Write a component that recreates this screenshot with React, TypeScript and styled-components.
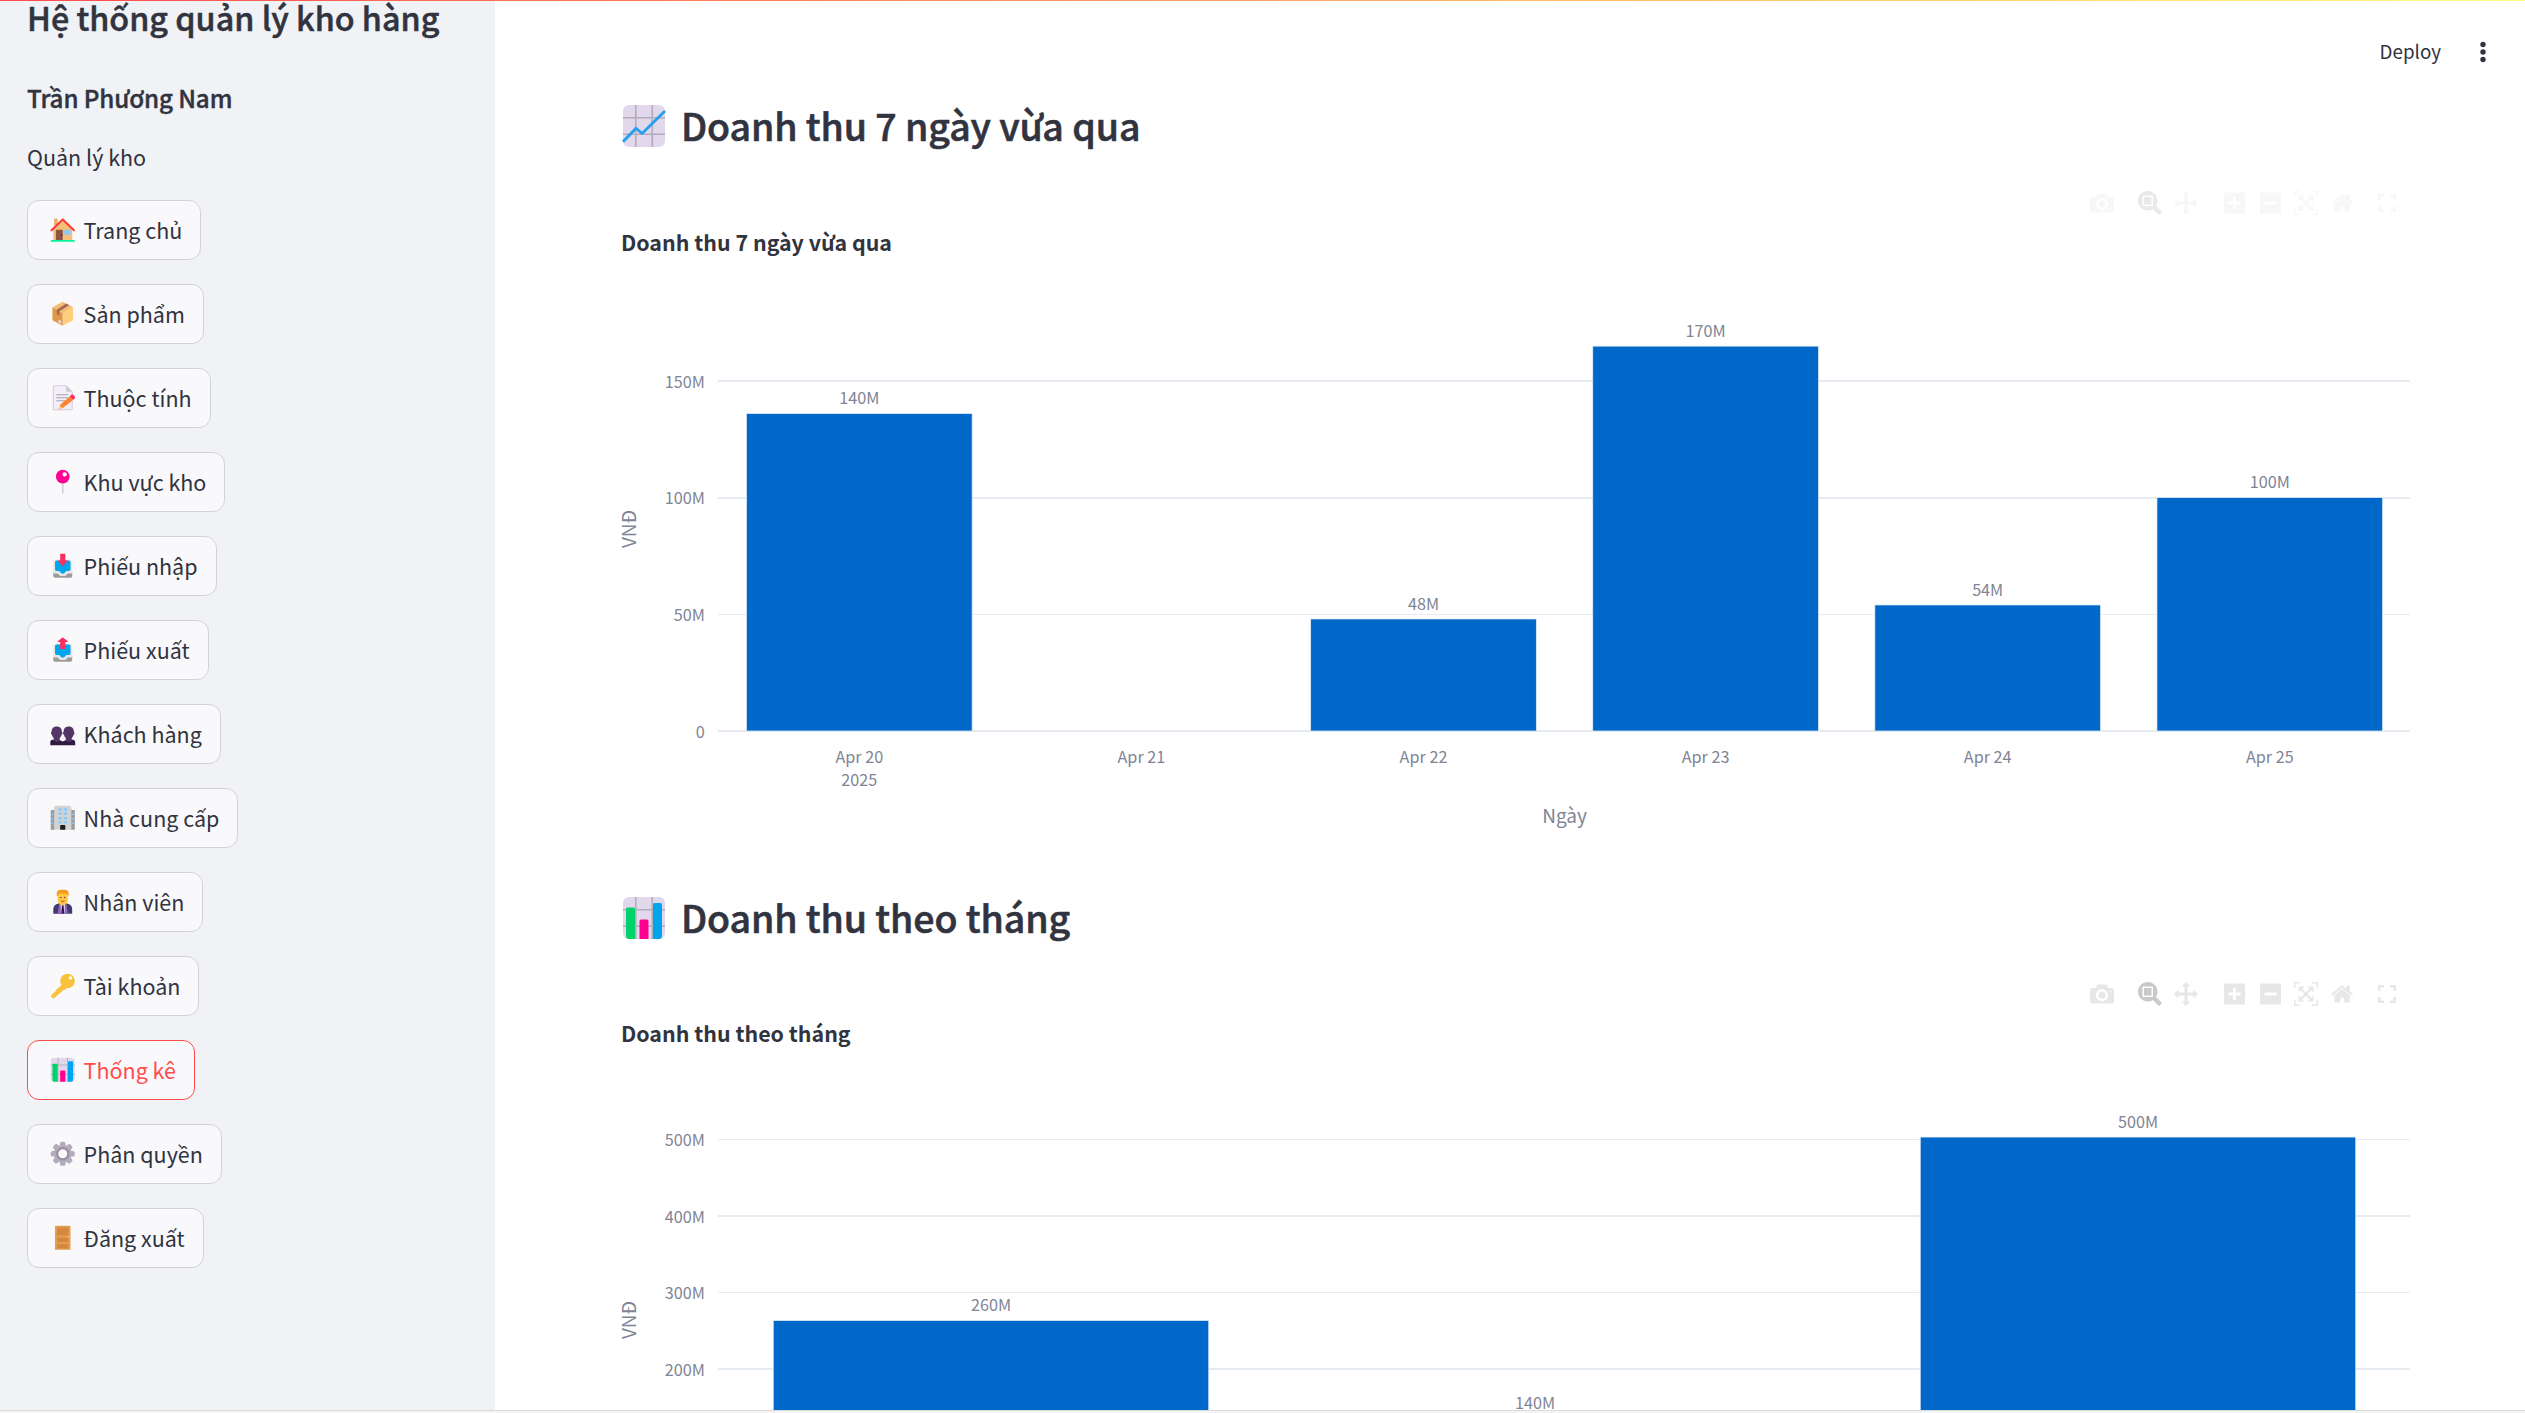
import React from "react";
import styled, { createGlobalStyle } from "styled-components";

const GlobalStyle = createGlobalStyle`
  *, *::before, *::after { box-sizing: border-box; }
  html, body { margin: 0; padding: 0; background: #fff; overflow: hidden; }
  body {
    font-family: "Noto Sans CJK SC", "Noto Sans", sans-serif;
    color: #31333f;
    font-size: 21.5px;
  }
`;

const Shell = styled.div`
  height: 1413px;
  display: grid;
  grid-template-rows: 1410px 3px;
  overflow: hidden;
`;
const Page = styled.div`
  position: relative;
  display: grid;
  grid-template-columns: 494.5px 1fr;
  overflow: hidden;
`;
const TopAccent = styled.div`
  position: absolute;
  inset: 0 0 auto 0;
  height: 1px;
  background: linear-gradient(90deg, #ff4b4b, #fffd80);
`;
const WindowEdge = styled.div`
  background: #f4f4f4;
  border-top: 1px solid #dcdcdc;
`;

const Sidebar = styled.aside`
  background: #f0f2f6;
  padding-left: 27px;
  overflow: hidden;
`;
const AppTitle = styled.h1`
  margin: 0;
  font-size: 32.3px;
  line-height: 34px;
  font-weight: 500;
  -webkit-text-stroke: 0.5px currentColor;
  white-space: nowrap;
`;
const UserName = styled.h3`
  margin: 49px 0 0;
  font-size: 24.2px;
  line-height: 30px;
  font-weight: 500;
  letter-spacing: -0.09px;
  -webkit-text-stroke: 0.4px currentColor;
`;
const Role = styled.p`
  margin: 27px 0 0;
  line-height: 34px;
`;
const Nav = styled.nav`
  margin-top: 26px;
  display: flex;
  flex-direction: column;
  align-items: flex-start;
  gap: 24px;
`;
const NavButton = styled.button<{ $active?: boolean }>`
  height: 60px;
  padding: 0 18px 1px;
  display: flex;
  align-items: center;
  border: 1px solid ${(p) => (p.$active ? "#ff4b4b" : "#d1d3d8")};
  border-radius: 12px;
  background: #f9f9fb;
  color: ${(p) => (p.$active ? "#ff4b4b" : "#31333f")};
  font: inherit;
  line-height: 36px;
  white-space: nowrap;
  svg { margin: 0 7.600px 0 2.500px; }
`;

const Main = styled.main`
  display: flex;
  flex-direction: column;
  padding: 0 115px 0 126.5px;
  overflow: hidden;
`;
const Header = styled.header`
  height: 100px;
  flex: none;
  margin-right: -82px;
  display: flex;
  justify-content: flex-end;
  align-items: flex-start;
  padding-top: 36px;
  gap: 33px;
`;
const Deploy = styled.span`
  font-size: 18.8px;
  line-height: 30px;
`;
const Section = styled.section`
  flex: none;
`;
const Heading = styled.h2`
  margin: 0 0 0 -1px;
  height: 50px;
  display: flex;
  align-items: center;
  gap: 13px;
  font-size: 37.5px;
  line-height: 50px;
  font-weight: 500;
  letter-spacing: -0.09px;
  -webkit-text-stroke: 0.6px currentColor;
  white-space: nowrap;
  svg { margin-top: 2px; }
`;
const Toolbar = styled.div<{ $tone: string }>`
  margin-top: 35px;
  height: 36px;
  display: flex;
  justify-content: flex-end;
  padding-right: 8px;
  gap: 12px;
  color: ${(p) => p.$tone};
  ${Section} + ${Section} & { margin-top: 34px; }
`;
const ToolGroup = styled.div`
  display: flex;
`;
const Tool = styled.span<{ $tone?: string; $width?: number }>`
  width: ${(p) => p.$width ?? 36}px;
  height: 36px;
  display: flex;
  align-items: center;
  justify-content: center;
  color: ${(p) => p.$tone ?? "inherit"};
`;
const ChartTitle = styled.h4`
  margin: 6px 0 0;
  font-size: 21.4px;
  line-height: 30px;
  font-weight: 700;
`;
const Plot = styled.svg`
  display: block;
  height: 635px;
  overflow: visible;
  font-family: "Noto Sans CJK SC", "Noto Sans", sans-serif;
  fill: #808495;
`;

type Art = { size?: number };
const Emoji = ({ size = 27.5, children }: Art & { children: React.ReactNode }) => (
  <svg width={size} height={size} viewBox="0 0 32 32">{children}</svg>
);

const House = () => (
  <Emoji>
    <path d="M6 3h4v8H6z" fill="#f3ad61" />
    <path d="M5 15 16 5l11 10v14H5z" fill="#f3c07b" />
    <path d="M8 16h8v12H8z" fill="#8c5543" />
    <path d="M18 16h7v6h-7z" fill="#83cbff" />
    <path d="M3 16.5 16 4l13 12.5" fill="none" stroke="#ff3838" strokeWidth="2.4" strokeLinecap="round" strokeLinejoin="round" />
    <rect x="2" y="28" width="28" height="2" rx="1" fill="#00f397" />
    <circle cx="14.6" cy="22.5" r=".9" fill="#3c1b10" />
  </Emoji>
);
const Box = () => (
  <Emoji>
    <path d="m16 2 12 6.5-12 7L4 8.500z" fill="#f3bd73" />
    <path d="m4 8.500 12 7V30L4 23.500z" fill="#e19747" />
    <path d="m28 8.500-12 7V30l12-6.500z" fill="#ffce7c" />
    <path d="m20 4.200 3.500 1.900L12 13v5l-3-1.800v-5z" fill="#a56953" />
    <path d="m11 23 3 1.500v3L11 26z" fill="#ebe7ed" />
  </Emoji>
);
const Memo = () => (
  <Emoji>
    <path d="M6 2h14l7 7v20a1 1 0 0 1-1 1H6a1 1 0 0 1-1-1V3a1 1 0 0 1 1-1z" fill="#f3eef8" stroke="#cdc4d6" strokeWidth="1" />
    <path d="M20 2v6a1 1 0 0 0 1 1h6z" fill="#cdc4d6" />
    <path d="M8.500 12.500h14M8.500 16h14M8.500 19.500h10" stroke="#9b9b9b" strokeWidth="1" />
    <path d="m24 14.500 4 4L16 28l-4.500 1L13 24z" fill="#ff822d" />
    <path d="m24 14.500 2-2q1-1 2 0l2 2q1 1 0 2l-2 2z" fill="#f92f60" />
    <path d="m13 25-1.800 4.500 4.300-1.500z" fill="#ffce7c" />
  </Emoji>
);
const Pin = () => (
  <Emoji>
    <rect x="15" y="15" width="2" height="15" rx="1" fill="#d3d3d3" />
    <circle cx="16" cy="10" r="8" fill="#ff0090" />
    <circle cx="18.200" cy="7.500" r="2.500" fill="#fff" />
  </Emoji>
);
const Tray = ({ up }: { up?: boolean }) => (
  <Emoji>
    <rect x="5" y="9" width="22" height="19" rx="3" fill="#e6e6e6" />
    <path d="M5 24h5.500l3 3h5l3-3H27v4a2 2 0 0 1-2 2H7a2 2 0 0 1-2-2z" fill="#9b9b9b" />
    <path d="M5 22h6l3 3h4l3-3h6v3h-5l-3 3h-6l-3-3H5z" fill="#e6e6e6" />
    <path d="M9 10h14a2 2 0 0 1 2 2v8a2 2 0 0 1-2 2h-3l-2.500 3h-3L12 22H9a2 2 0 0 1-2-2v-8a2 2 0 0 1 2-2z" fill="#00a6ed" />
    {up ? (
      <path d="M13 15V7h-2.500q-1 0-.3-.9L16 1.500l5.800 4.600q.7.900-.3.900H19v8z" fill="#f92f60" />
    ) : (
      <path d="M13 2h6v8h2q1 0 .3.900L16 16.500l-5.300-5.600Q10 10 11 10h2z" fill="#f92f60" />
    )}
  </Emoji>
);
const People = () => (
  <Emoji>
    <path d="M1.500 29.500V26q0-3 3-3h7L16 25l4.500-2h7q3 0 3 3v3.500z" fill="#321b41" />
    <path d="M9 7.500c4 0 6 2.500 6 6.500 1 0 1 3-.3 3-.7 2.500-1.200 3-2.200 4v3l-3.500 2-3.500-2v-3c-1-1-1.500-1.500-2.200-4-1.300 0-1.300-3-.3-3 0-4 2-6.500 6-6.500z" fill="#533566" />
    <path d="M23 7.500c4 0 6 2.500 6 6.500 1 0 1 3-.3 3-.7 2.500-1.200 3-2.200 4v3L23 26l-3.500-2v-3c-1-1-1.500-1.500-2.200-4-1.300 0-1.300-3-.3-3 0-4 2-6.500 6-6.500z" fill="#533566" />
  </Emoji>
);
const Office = () => (
  <Emoji>
    <path d="M3 7h4v23H2V8q0-1 1-1zM25 7h4q1 0 1 1v22h-5z" fill="#9b9b9b" />
    <path d="M8 2h16q2 0 2 2v26H6V4q0-2 2-2z" fill="#d3d3d3" />
    {[5, 10, 15, 20].map((y) => (
      <path key={y} d={`M11 ${y}h4v2.800h-4zM17 ${y}h4v2.800h-4z`} fill="#83cbff" />
    ))}
    {[11, 16, 21].map((y) => (
      <path key={y} d={`M3 ${y}h2v2H3zM27 ${y}h2v2h-2z`} fill="#83cbff" />
    ))}
    <path d="M13 25.500q0-1 1-1h4q1 0 1 1V30h-6z" fill="#1c1c1c" />
  </Emoji>
);
const Worker = () => (
  <Emoji>
    <path d="M5 30v-5q0-6 6-7h10q6 1 6 7v5z" fill="#433b6b" />
    <path d="m12 17 4 2 4-2 2 13H10z" fill="#8d65c5" />
    <path d="m13.500 18 2.500 2 2.500-2-.5 12h-4z" fill="#f3eef8" />
    <path d="m15 20h2l.8 10h-3.600z" fill="#321b41" />
    <path d="M10 8q0-4 6-4t6 4v4q0 6-3.500 7.500L16 20l-2.500-.5Q10 18 10 12z" fill="#ffc83d" />
    <path d="M9 10V6.500Q9 2 14 2h4q5 0 5 5v3l-1.500-2.500q-1-1.500-3-1-3 .5-5 0-2 0-2.500 1.500z" fill="#f59a23" />
    <circle cx="13.700" cy="11" r=".8" fill="#533566" /><circle cx="18.300" cy="11" r=".8" fill="#533566" />
    <path d="M14 15q2 1.500 4 0" stroke="#bb1d80" fill="none" />
  </Emoji>
);
const Key = () => (
  <Emoji>
    <path d="M15.500 18.500 5 28" stroke="#f9c23c" strokeWidth="5" strokeLinecap="round" />
    <path d="m10 24 4 0 1-3h4l2-4-5-3-8 7z" fill="#f9c23c" />
    <circle cx="21.500" cy="10.500" r="8.500" fill="#f9c23c" />
    <circle cx="25" cy="7" r="2" fill="#fff" />
  </Emoji>
);
const Gear = () => (
  <Emoji>
    {[0, 45, 90, 135].map((a) => (
      <rect key={a} x="12.700" y="2" width="6.600" height="28" rx="2.200" fill="#b4acbc" transform={`rotate(${a} 16 16)`} />
    ))}
    <circle cx="16" cy="16" r="10.500" fill="#b4acbc" />
    <circle cx="16" cy="16" r="6.500" fill="#f9f9fb" stroke="#998ea4" strokeWidth="2.600" />
  </Emoji>
);
const Door = () => (
  <Emoji>
    <path d="M8 2h16q1 0 1 1v27H7V3q0-1 1-1z" fill="#e39d54" />
    <path d="M9.500 4h13v9h-13zM9.500 16h13v5h-13zM9.500 23.500h13v5h-13z" fill="#d3883e" />
    <circle cx="23" cy="15" r="1" fill="#f9c23c" />
  </Emoji>
);
const PaperGrid = () => (
  <>
    <rect x="2" y="2" width="28" height="28" rx="4" fill="#e1d8ec" />
    <path d="M10.500 2v28M21.500 2v28M2 10.500h28M2 21.500h28" stroke="#b4acbc" strokeWidth="1.100" />
  </>
);
const ChartBars = ({ size }: Art) => (
  <Emoji size={size}>
    <PaperGrid />
    <path d="M4 10q0-1 1-1h4q1 0 1 1v20H6q-2 0-2-2z" fill="#00d26a" />
    <path d="M13 18q0-1 1-1h4q1 0 1 1v12h-6z" fill="#ff0090" />
    <path d="M22 7q0-1 1-1h4q1 0 1 1v21q0 2-2 2h-4z" fill="#00a6ed" />
  </Emoji>
);
const ChartLine = ({ size }: Art) => (
  <Emoji size={size}>
    <PaperGrid />
    <path d="m2 26.500 8.700-9 4 3.500L30 6" fill="none" stroke="#26a0ec" strokeWidth="1.900" strokeLinejoin="round" />
  </Emoji>
);

const NAV: { label: string; icon: React.ReactNode; active?: boolean }[] = [
  { label: "Trang chủ", icon: <House /> },
  { label: "Sản phẩm", icon: <Box /> },
  { label: "Thuộc tính", icon: <Memo /> },
  { label: "Khu vực kho", icon: <Pin /> },
  { label: "Phiếu nhập", icon: <Tray /> },
  { label: "Phiếu xuất", icon: <Tray up /> },
  { label: "Khách hàng", icon: <People /> },
  { label: "Nhà cung cấp", icon: <Office /> },
  { label: "Nhân viên", icon: <Worker /> },
  { label: "Tài khoản", icon: <Key /> },
  { label: "Thống kê", icon: <ChartBars />, active: true },
  { label: "Phân quyền", icon: <Gear /> },
  { label: "Đăng xuất", icon: <Door /> },
];

const GLYPHS = {
  camera: [1000, "m500 450c-83 0-150-67-150-150 0-83 67-150 150-150 83 0 150 67 150 150 0 83-67 150-150 150z m400 150h-120c-16 0-34 13-39 29l-31 93c-6 15-23 28-40 28h-340c-16 0-34-13-39-28l-31-94c-6-15-23-28-40-28h-120c-55 0-100-45-100-100v-450c0-55 45-100 100-100h800c55 0 100 45 100 100v450c0 55-45 100-100 100z m-400-550c-138 0-250 112-250 250 0 138 112 250 250 250 138 0 250-112 250-250 0-138-112-250-250-250z m365 380c-19 0-35 16-35 35 0 19 16 35 35 35 19 0 35-16 35-35 0-19-16-35-35-35z"],
  zoom: [1000, "m1000-25l-250 251c40 63 63 138 63 218 0 224-182 406-407 406-224 0-406-182-406-406s183-406 407-406c80 0 155 22 218 62l250-250 125 125z m-812 250l0 438 437 0 0-438-437 0z m62 375l313 0 0-312-313 0 0 312z"],
  pan: [1000, "m1000 350l-187 188 0-125-250 0 0 250 125 0-188 187-187-187 125 0 0-250-250 0 0 125-188-188 186-187 0 125 252 0 0-250-125 0 187-188 188 188-125 0 0 250 250 0 0-126 187 188z"],
  plus: [875, "m1 787l0-875 875 0 0 875-875 0z m687-500l-187 0 0-187-125 0 0 187-188 0 0 125 188 0 0 187 125 0 0-187 187 0 0-125z"],
  minus: [875, "m0 788l0-876 875 0 0 876-875 0z m688-500l-500 0 0 125 500 0 0-125z"],
  autoscale: [1000, "m250 850l-187 0-63 0 0-62 0-188 63 0 0 188 187 0 0 62z m688 0l-188 0 0-62 188 0 0-188 62 0 0 188 0 62-62 0z m-875-938l0 188-63 0 0-188 0-62 63 0 187 0 0 62-187 0z m875 188l0-188-188 0 0-62 188 0 62 0 0 62 0 188-62 0z m-125 188l-1 0-93-94-156 156 156 156 92-93 2 0 0 250-250 0 0-2 93-92-156-156-156 156 94 92 0 2-250 0 0-250 0 0 93 93 157-156-157-156-93 94 0 0 0-250 250 0 0 0-94 93 156 157 156-157-93-93 0 0 250 0 0 250z"],
  home: [928.6, "m786 296v-267q0-15-11-26t-25-10h-214v214h-143v-214h-214q-15 0-25 10t-11 26v267q0 1 0 2t0 2l321 264 321-264q1-1 1-4z m124 39l-34-41q-5-5-12-6h-2q-7 0-12 3l-386 322-386-322q-7-4-13-4-7 2-12 7l-35 41q-4 5-3 13t6 12l401 334q18 15 42 15t43-15l136-114v109q0 8 5 13t13 5h107q8 0 13-5t5-13v-227l122-102q5-5 6-12t-4-13z"],
} as const;

const Glyph = ({ name }: { name: keyof typeof GLYPHS }) => {
  const [w, d] = GLYPHS[name];
  return (
    <svg width={w * 0.024} height="24" viewBox={`0 0 ${w} 1000`} fill="currentColor">
      <path d={d} transform="matrix(1 0 0 -1 0 850)" />
    </svg>
  );
};

const ModeBar = ({ tone, activeTone }: { tone: string; activeTone: string }) => (
  <Toolbar $tone={tone}>
    <ToolGroup><Tool><Glyph name="camera" /></Tool></ToolGroup>
    <ToolGroup>
      <Tool $tone={activeTone}><Glyph name="zoom" /></Tool>
      <Tool><Glyph name="pan" /></Tool>
    </ToolGroup>
    <ToolGroup>
      <Tool><Glyph name="plus" /></Tool>
      <Tool><Glyph name="minus" /></Tool>
      <Tool><Glyph name="autoscale" /></Tool>
      <Tool><Glyph name="home" /></Tool>
    </ToolGroup>
    <ToolGroup>
      <Tool $width={30}>
        <svg width="18" height="18" viewBox="0 0 18 18" fill="none" stroke="currentColor" strokeWidth="2.600">
          <path d="M1.300 6V1.300H6M12 1.300h4.700V6M16.700 12v4.700H12M6 16.700H1.300V12" />
        </svg>
      </Tool>
    </ToolGroup>
  </Toolbar>
);

type Bar = { x: number; w: number; value: number; label: string };
type ChartSpec = {
  perUnit: number;
  ticks: { value: number; thick: number }[];
  bars: Bar[];
  categories: string[][];
  xTitle?: string;
};
const ZERO = 474;
const at = (i: number) => 238.3 + i * 282.1;

const BarChart = ({ spec }: { spec: ChartSpec }) => (
  <Plot width="1789" height="635" viewBox="0 0 1789 635">
    {spec.ticks.map((t) => {
      const y = ZERO - t.value * spec.perUnit;
      return (
        <g key={t.value}>
          <rect x="97" y={t.thick === 2 ? Math.round(y) - 1 : Math.floor(y)} width="1692" height={t.thick} fill="#e6eaf1" />
          <text x="83.800" y={y + 6.600} fontSize="16.200" textAnchor="end">{t.value ? `${t.value}M` : "0"}</text>
        </g>
      );
    })}
    {spec.bars.map((b) => {
      const h = b.value * spec.perUnit;
      return (
        <g key={b.label}>
          <rect x={b.x - b.w / 2} y={ZERO - h} width={b.w} height={h} fill="#0068c9" stroke="#e5ecf6" strokeWidth=".75" />
          <text x={b.x} y={ZERO - h - 9.300} fontSize="16.200" textAnchor="middle">{b.label}</text>
        </g>
      );
    })}
    {spec.categories.map((lines, i) =>
      lines.map((line, row) => (
        <text key={line} x={at(i)} y={506 + row * 23} fontSize="16.200" textAnchor="middle">{line}</text>
      ))
    )}
    {spec.xTitle && (
      <text x="943.500" y="566.300" fontSize="19" textAnchor="middle">{spec.xTitle}</text>
    )}
    <text transform="translate(14.500 272) rotate(-90)" fontSize="19" textAnchor="middle">VNĐ</text>
  </Plot>
);

const weekly: ChartSpec = {
  perUnit: 2.334,
  ticks: [{ value: 0, thick: 2 }, { value: 50, thick: 1 }, { value: 100, thick: 2 }, { value: 150, thick: 2 }],
  bars: [
    { x: at(0), w: 225.7, value: 136, label: "140M" },
    { x: at(2), w: 225.7, value: 48, label: "48M" },
    { x: at(3), w: 225.7, value: 164.9, label: "170M" },
    { x: at(4), w: 225.7, value: 54, label: "54M" },
    { x: at(5), w: 225.7, value: 100, label: "100M" },
  ],
  categories: [["Apr 20", "2025"], ["Apr 21"], ["Apr 22"], ["Apr 23"], ["Apr 24"], ["Apr 25"]],
  xTitle: "Ngày",
};
const monthly: ChartSpec = {
  perUnit: 0.765,
  ticks: [
    { value: 200, thick: 2 }, { value: 300, thick: 1 },
    { value: 400, thick: 2 }, { value: 500, thick: 1 },
  ],
  bars: [
    { x: 370, w: 435.5, value: 263.4, label: "260M" },
    { x: 914, w: 435.5, value: 135, label: "140M" },
    { x: 1517, w: 435.5, value: 503.2, label: "500M" },
  ],
  categories: [],
};

export default function App() {
  return (
    <>
      <GlobalStyle />
      <Shell>
        <Page>
          <Sidebar>
            <AppTitle>Hệ thống quản lý kho hàng</AppTitle>
            <UserName>Trần Phương Nam</UserName>
            <Role>Quản lý kho</Role>
            <Nav>
              {NAV.map((n) => (
                <NavButton key={n.label} $active={n.active}>
                  {n.icon}
                  {n.label}
                </NavButton>
              ))}
            </Nav>
          </Sidebar>
          <Main>
            <Header>
              <Deploy>Deploy</Deploy>
              <svg width="18" height="32" viewBox="0 0 18 32" fill="#31333f">
                <circle cx="9" cy="8.500" r="2.700" /><circle cx="9" cy="16" r="2.700" /><circle cx="9" cy="23.500" r="2.700" />
              </svg>
            </Header>
            <Section>
              <Heading><ChartLine size={48} />Doanh thu 7 ngày vừa qua</Heading>
              <ModeBar tone="#f7f7f7" activeTone="#e9e9e9" />
              <ChartTitle>Doanh thu 7 ngày vừa qua</ChartTitle>
              <BarChart spec={weekly} />
            </Section>
            <Section>
              <Heading><ChartBars size={48} />Doanh thu theo tháng</Heading>
              <ModeBar tone="#e7e7e7" activeTone="#c9c9c9" />
              <ChartTitle>Doanh thu theo tháng</ChartTitle>
              <BarChart spec={monthly} />
            </Section>
          </Main>
          <TopAccent />
        </Page>
        <WindowEdge />
      </Shell>
    </>
  );
}
